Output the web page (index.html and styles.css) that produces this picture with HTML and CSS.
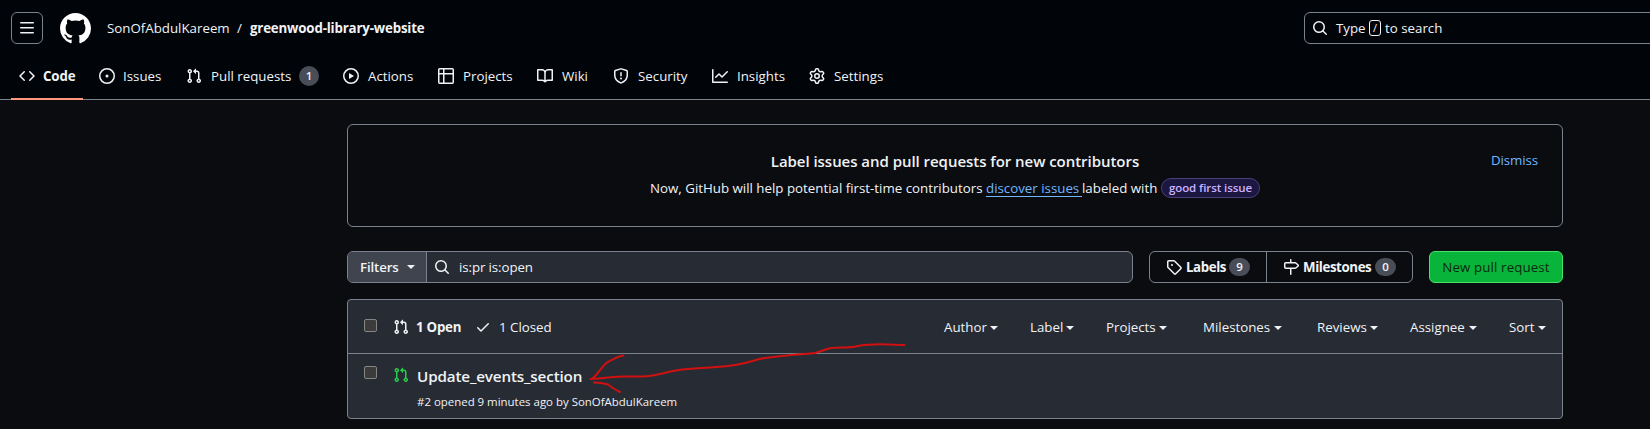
FILE: index.html
```
<!DOCTYPE html>
<html lang="en">
<head>
<meta charset="utf-8">
<title>Pull requests · greenwood-library-website</title>
<link rel="stylesheet" href="styles.css">
</head>
<body>
<svg class="defs" width="0" height="0">
  <symbol id="pr" viewBox="0 0 16 16"><path d="M1.5 3.25a2.25 2.25 0 1 1 3 2.122v5.256a2.251 2.251 0 1 1-1.5 0V5.372A2.25 2.25 0 0 1 1.5 3.25Zm5.677-.177L9.573.677A.25.25 0 0 1 10 .854V2.5h1A2.5 2.5 0 0 1 13.5 5v5.628a2.251 2.251 0 1 1-1.5 0V5a1 1 0 0 0-1-1h-1v1.646a.25.25 0 0 1-.427.177L7.177 3.427a.25.25 0 0 1 0-.354ZM3.75 2.5a.75.75 0 1 0 0 1.5.75.75 0 0 0 0-1.5Zm0 9.5a.75.75 0 1 0 0 1.5.75.75 0 0 0 0-1.5Zm8.25.75a.75.75 0 1 0 1.5 0 .75.75 0 0 0-1.5 0Z"/></symbol>
  <symbol id="search" viewBox="0 0 16 16"><path d="M10.68 11.74a6 6 0 0 1-7.922-8.982 6 6 0 0 1 8.982 7.922l3.04 3.04a.749.749 0 0 1-.326 1.275.749.749 0 0 1-.734-.215ZM11.5 7a4.499 4.499 0 1 0-8.997 0A4.499 4.499 0 0 0 11.5 7Z"/></symbol>
</svg>
<header class="header">
  <div class="topbar">
    <button class="menu-btn"><svg class="icon" viewBox="0 0 16 16"><path d="M1 2.75A.75.75 0 0 1 1.75 2h12.5a.75.75 0 0 1 0 1.5H1.75A.75.75 0 0 1 1 2.75Zm0 5A.75.75 0 0 1 1.75 7h12.5a.75.75 0 0 1 0 1.5H1.75A.75.75 0 0 1 1 7.75ZM1.75 12h12.5a.75.75 0 0 1 0 1.5H1.75a.75.75 0 0 1 0-1.5Z"/></svg></button>
    <svg class="logo" viewBox="0 0 16 16"><path d="M8 0c4.42 0 8 3.58 8 8a8.013 8.013 0 0 1-5.45 7.59c-.4.08-.55-.17-.55-.38 0-.27.01-1.13.01-2.2 0-.75-.25-1.23-.54-1.48 1.78-.2 3.65-.88 3.65-3.95 0-.88-.31-1.59-.82-2.15.08-.2.36-1.02-.08-2.12 0 0-.67-.22-2.2.82-.64-.18-1.32-.27-2-.27-.68 0-1.36.09-2 .27-1.53-1.03-2.2-.82-2.2-.82-.44 1.1-.16 1.92-.08 2.12-.51.56-.82 1.28-.82 2.15 0 3.06 1.86 3.75 3.64 3.95-.23.2-.44.55-.51 1.07-.46.21-1.61.55-2.33-.66-.15-.24-.6-.83-1.23-.82-.67.01-.27.38.01.53.34.19.73.9.82 1.13.16.45.68 1.31 2.69.94 0 .67.01 1.3.01 1.49 0 .21-.15.45-.55.38A7.995 7.995 0 0 1 0 8c0-4.42 3.58-8 8-8Z"/></svg>
    <div class="crumbs"><span class="owner">SonOfAbdulKareem</span><span class="slash">/</span><strong class="repo">greenwood-library-website</strong></div>
    <div class="global-search"><svg class="icon"><use href="#search"/></svg><span class="type">Type</span><kbd>/</kbd><span>to search</span></div>
  </div>
  <nav class="nav">
    <a class="tab tab-active"><svg class="icon" viewBox="0 0 16 16"><path d="m11.28 3.22 4.25 4.25a.75.75 0 0 1 0 1.06l-4.25 4.25a.749.749 0 0 1-1.275-.326.749.749 0 0 1 .215-.734L13.94 8l-3.72-3.72a.749.749 0 0 1 .326-1.275.749.749 0 0 1 .734.215Zm-6.56 0a.751.751 0 0 1 1.042.018.751.751 0 0 1 .018 1.042L2.06 8l3.72 3.72a.749.749 0 0 1-.326 1.275.749.749 0 0 1-.734-.215L.47 8.53a.75.75 0 0 1 0-1.06Z"/></svg><span class="w-code">Code</span></a>
    <a class="tab"><svg class="icon" viewBox="0 0 16 16"><path d="M8 9.5a1.5 1.5 0 1 0 0-3 1.5 1.5 0 0 0 0 3Z"/><path d="M8 0a8 8 0 1 1 0 16A8 8 0 0 1 8 0ZM1.5 8a6.5 6.5 0 1 0 13 0 6.5 6.5 0 0 0-13 0Z"/></svg><span class="w-issues">Issues</span></a>
    <a class="tab tab-wide"><svg class="icon"><use href="#pr"/></svg><span class="w-pulls">Pull requests</span><span class="count">1</span></a>
    <a class="tab tab-wide"><svg class="icon" viewBox="0 0 16 16"><path d="M8 0a8 8 0 1 1 0 16A8 8 0 0 1 8 0ZM1.5 8a6.5 6.5 0 1 0 13 0 6.5 6.5 0 0 0-13 0Zm4.879-2.773 4.264 2.559a.25.25 0 0 1 0 .428l-4.264 2.559A.25.25 0 0 1 6 10.559V5.442a.25.25 0 0 1 .379-.215Z"/></svg><span class="w-actions">Actions</span></a>
    <a class="tab tab-wide"><svg class="icon" viewBox="0 0 16 16"><path d="M0 1.75C0 .784.784 0 1.75 0h12.5C15.216 0 16 .784 16 1.75v12.5A1.75 1.75 0 0 1 14.25 16H1.75A1.75 1.75 0 0 1 0 14.25ZM6.5 6.5v8h7.75a.25.25 0 0 0 .25-.25V6.5Zm8-1.5V1.75a.25.25 0 0 0-.25-.25H6.5V5Zm-13 1.5v7.75c0 .138.112.25.25.25H5v-8ZM5 5V1.5H1.75a.25.25 0 0 0-.25.25V5Z"/></svg><span class="w-projects">Projects</span></a>
    <a class="tab tab-wide"><svg class="icon" viewBox="0 0 16 16"><path d="M0 1.75A.75.75 0 0 1 .75 1h4.253c1.227 0 2.317.59 3 1.501A3.743 3.743 0 0 1 11.006 1h4.245a.75.75 0 0 1 .75.75v10.5a.75.75 0 0 1-.75.75h-4.507a2.25 2.25 0 0 0-1.591.659l-.622.621a.75.75 0 0 1-1.06 0l-.622-.621A2.25 2.25 0 0 0 5.258 13H.75a.75.75 0 0 1-.75-.75Zm7.251 10.324.004-5.073-.002-2.253A2.25 2.25 0 0 0 5.003 2.5H1.5v9h3.757a3.75 3.75 0 0 1 1.994.574ZM8.755 4.75l-.004 7.322a3.752 3.752 0 0 1 1.992-.572H14.5v-9h-3.495a2.25 2.25 0 0 0-2.25 2.25Z"/></svg><span class="w-wiki">Wiki</span></a>
    <a class="tab tab-wide"><svg class="icon" viewBox="0 0 16 16"><path d="M7.467.133a1.748 1.748 0 0 1 1.066 0l5.25 1.68A1.75 1.75 0 0 1 15 3.48V7c0 1.566-.32 3.182-1.303 4.682-.983 1.498-2.585 2.813-5.032 3.855a1.697 1.697 0 0 1-1.33 0c-2.447-1.042-4.049-2.357-5.032-3.855C1.32 10.182 1 8.566 1 7V3.48a1.75 1.75 0 0 1 1.217-1.667Zm.61 1.429a.25.25 0 0 0-.153 0l-5.25 1.68a.25.25 0 0 0-.174.238V7c0 1.358.275 2.666 1.057 3.86.784 1.194 2.121 2.34 4.366 3.297a.196.196 0 0 0 .154 0c2.245-.956 3.582-2.104 4.366-3.298C13.225 9.666 13.5 8.36 13.5 7V3.48a.251.251 0 0 0-.174-.237l-5.25-1.68ZM8.75 4.75v3a.75.75 0 0 1-1.5 0v-3a.75.75 0 0 1 1.5 0ZM9 10.5a1 1 0 1 1-2 0 1 1 0 0 1 2 0Z"/></svg><span class="w-security">Security</span></a>
    <a class="tab tab-wide"><svg class="icon" viewBox="0 0 16 16"><path d="M1.5 1.75V13.5h13.75a.75.75 0 0 1 0 1.5H.75a.75.75 0 0 1-.75-.75V1.75a.75.75 0 0 1 1.5 0Zm14.28 2.53-5.25 5.25a.75.75 0 0 1-1.06 0L7 7.06 4.28 9.78a.751.751 0 0 1-1.042-.018.751.751 0 0 1-.018-1.042l3.25-3.25a.75.75 0 0 1 1.06 0L10 7.94l4.72-4.72a.751.751 0 0 1 1.042.018.751.751 0 0 1 .018 1.042Z"/></svg><span class="w-insights">Insights</span></a>
    <a class="tab tab-wide"><svg class="icon" viewBox="0 0 16 16"><path d="M8 0a8.2 8.2 0 0 1 .701.031C9.444.095 9.99.645 10.16 1.29l.288 1.107c.018.066.079.158.212.224.231.114.454.243.668.386.123.082.233.09.299.071l1.103-.303c.644-.176 1.392.021 1.82.63.27.385.506.792.704 1.218.315.675.111 1.422-.364 1.891l-.814.806c-.049.048-.098.147-.088.294.016.257.016.515 0 .772-.01.147.038.246.088.294l.814.806c.475.469.679 1.216.364 1.891a7.977 7.977 0 0 1-.704 1.217c-.428.61-1.176.807-1.82.63l-1.102-.302c-.067-.019-.177-.011-.3.071a5.909 5.909 0 0 1-.668.386c-.133.066-.194.158-.211.224l-.29 1.106c-.168.646-.715 1.196-1.458 1.26a8.006 8.006 0 0 1-1.402 0c-.743-.064-1.289-.614-1.458-1.26l-.289-1.106c-.018-.066-.079-.158-.212-.224a5.738 5.738 0 0 1-.668-.386c-.123-.082-.233-.09-.299-.071l-1.103.303c-.644.176-1.392-.021-1.82-.63a8.12 8.12 0 0 1-.704-1.218c-.315-.675-.111-1.422.363-1.891l.815-.806c.05-.048.098-.147.088-.294a6.214 6.214 0 0 1 0-.772c.01-.147-.038-.246-.088-.294l-.815-.806C.635 6.045.431 5.298.746 4.623a7.92 7.92 0 0 1 .704-1.217c.428-.61 1.176-.807 1.82-.63l1.102.302c.067.019.177.011.3-.071.214-.143.437-.272.668-.386.133-.066.194-.158.211-.224l.29-1.106C6.009.645 6.556.095 7.299.03 7.53.01 7.764 0 8 0Zm-.571 1.525c-.036.003-.108.036-.137.146l-.289 1.105c-.147.561-.549.967-.998 1.189-.173.086-.34.183-.5.29-.417.278-.97.423-1.529.27l-1.103-.303c-.109-.03-.175.016-.195.045-.22.312-.412.644-.573.99-.014.031-.021.11.059.19l.815.806c.411.406.562.957.53 1.456a4.709 4.709 0 0 0 0 .582c.032.499-.119 1.05-.53 1.456l-.815.806c-.081.08-.073.159-.059.19.162.346.353.677.573.989.02.03.085.076.195.046l1.102-.303c.56-.153 1.113-.008 1.53.27.161.107.328.204.501.29.447.222.85.629.997 1.189l.289 1.105c.029.109.101.143.137.146a6.6 6.6 0 0 0 1.142 0c.036-.003.108-.036.137-.146l.289-1.105c.147-.561.549-.967.998-1.189.173-.086.34-.183.5-.29.417-.278.97-.423 1.529-.27l1.103.303c.109.029.175-.016.195-.045.22-.313.411-.644.573-.99.014-.031.021-.11-.059-.19l-.815-.806c-.411-.406-.562-.957-.53-1.456a4.709 4.709 0 0 0 0-.582c-.032-.499.119-1.05.53-1.456l.815-.806c.081-.08.073-.159.059-.19a6.464 6.464 0 0 0-.573-.989c-.02-.03-.085-.076-.195-.046l-1.102.303c-.56.153-1.113.008-1.53-.27a4.44 4.44 0 0 0-.501-.29c-.447-.222-.85-.629-.997-1.189l-.289-1.105c-.029-.11-.101-.143-.137-.146a6.6 6.6 0 0 0-1.142 0ZM11 8a3 3 0 1 1-6 0 3 3 0 0 1 6 0ZM9.5 8a1.5 1.5 0 1 0-3.001.001A1.5 1.5 0 0 0 9.5 8Z"/></svg><span>Settings</span></a>
  </nav>
</header>
<main class="main">
  <section class="notice">
    <h2>Label issues and pull requests for new contributors</h2>
    <p><span class="now">Now, GitHub will help potential first-time contributors</span><a class="discover">discover issues</a><span class="labeled">labeled with</span><span class="label">good first issue</span></p>
    <a class="dismiss">Dismiss</a>
  </section>
  <div class="toolbar">
    <div class="filter">
      <button class="filters">Filters<i class="caret"></i></button>
      <div class="query"><svg class="icon"><use href="#search"/></svg><span>is:pr is:open</span></div>
    </div>
    <div class="group">
      <a class="labels"><svg class="icon" viewBox="0 0 16 16"><path d="M1 7.775V2.75C1 1.784 1.784 1 2.75 1h5.025c.464 0 .91.184 1.238.513l6.25 6.25a1.75 1.75 0 0 1 0 2.474l-5.026 5.026a1.75 1.75 0 0 1-2.474 0l-6.25-6.25A1.752 1.752 0 0 1 1 7.775Zm1.5 0c0 .066.026.13.073.177l6.25 6.25a.25.25 0 0 0 .354 0l5.025-5.025a.25.25 0 0 0 0-.354l-6.25-6.25a.25.25 0 0 0-.177-.073H2.75a.25.25 0 0 0-.25.25ZM6 5a1 1 0 1 1 0 2 1 1 0 0 1 0-2Z"/></svg><span class="w-labels">Labels</span><span class="count pill">9</span></a>
      <a class="milestones"><svg class="icon" viewBox="0 0 16 16"><path d="M7.75 0a.75.75 0 0 1 .75.75V3h3.634c.414 0 .814.147 1.13.414l2.07 1.75a1.75 1.75 0 0 1 0 2.672l-2.07 1.75a1.75 1.75 0 0 1-1.13.414H8.5v5.25a.75.75 0 0 1-1.5 0V10H2.75A1.75 1.75 0 0 1 1 8.25v-3.5C1 3.784 1.784 3 2.75 3H7V.75A.75.75 0 0 1 7.75 0Zm4.384 8.5a.25.25 0 0 0 .161-.06l2.07-1.75a.248.248 0 0 0 0-.38l-2.07-1.75a.25.25 0 0 0-.161-.06H2.75a.25.25 0 0 0-.25.25v3.5c0 .138.112.25.25.25h9.384Z"/></svg><span class="w-miles">Milestones</span><span class="count pill">0</span></a>
    </div>
    <button class="new">New pull request</button>
  </div>
  <section class="list">
    <div class="list-head">
      <span class="check"></span>
      <svg class="icon state"><use href="#pr"/></svg>
      <strong class="open">1 Open</strong>
      <svg class="icon tick" viewBox="0 0 16 16"><path d="M13.78 4.22a.75.75 0 0 1 0 1.06l-7.25 7.25a.75.75 0 0 1-1.06 0L2.22 9.28a.751.751 0 0 1 .018-1.042.751.751 0 0 1 1.042-.018L6 10.94l6.72-6.72a.75.75 0 0 1 1.06 0Z"/></svg>
      <span class="closed">1 Closed</span>
      <div class="sorts">
        <span class="s-author">Author<i class="caret"></i></span>
        <span class="s-label">Label<i class="caret"></i></span>
        <span class="s-projects">Projects<i class="caret"></i></span>
        <span class="s-miles">Milestones<i class="caret"></i></span>
        <span class="s-reviews">Reviews<i class="caret"></i></span>
        <span class="s-assignee">Assignee<i class="caret"></i></span>
        <span class="s-sort">Sort<i class="caret"></i></span>
      </div>
    </div>
    <article class="row">
      <span class="check"></span>
      <svg class="icon state green"><use href="#pr"/></svg>
      <div>
        <h3>Update_events_section</h3>
        <p>#2 opened 9 minutes ago by SonOfAbdulKareem</p>
      </div>
    </article>
  </section>
</main>
<svg class="arrow" width="340" height="60" viewBox="580 340 340 60"><path d="M904.500 345C888 344.500 872 343 858 346C845 349 837 346 827 349C815 354 811 353.500 800 354.300C783 356 769 356 756 360C740 365 730 366.500 716 367C700 368.500 685 368 668 372C650 377 646 376.500 625 376.500C615 376.300 605 378.500 590.500 379M593 378C601 371 601 367 607 362.500C615 358.500 618 356 623.500 355.500M594 382.500C600 383 604 383 608 384.500C613 388 616 390.500 620 392"/></svg>
</body>
</html>
```
FILE: styles.css
```
* { box-sizing: border-box; }
body {
  margin: 0;
  height: 429px;
  overflow: hidden;
  background: #0a0c10;
  color: #f0f3f6;
  font: 13.3px/20px "Open Sans", "Noto Sans", sans-serif;
}
h2, h3, p { margin: 0; }
button { font: inherit; color: inherit; padding: 0; }
strong { font-weight: 700; }
span, strong, a, h2, h3, p, button { white-space: nowrap; }
.defs { position: absolute; }
.icon { width: 16px; height: 16px; flex: none; fill: currentColor; }

.header { height: 100px; background: #010409; border-bottom: 1px solid #7a828e; }
.topbar { display: flex; align-items: center; height: 56px; padding-left: 11px; }
.menu-btn { width: 32px; height: 32px; display: grid; place-items: center; background: none; border: 1px solid #7a828e; border-radius: 6px; }
.logo { width: 31px; height: 31px; margin-left: 17px; fill: #fff; }
.crumbs { display: flex; margin-left: 16px; flex: none; }
.owner { width: 130px; }
.slash { width: 13px; }
.repo { letter-spacing: -0.18px; }
.global-search {
  display: flex;
  align-items: center;
  flex: none;
  width: 400px;
  height: 32px;
  margin-left: auto;
  margin-right: -54px;
  padding-left: 7px;
  border: 1px solid #7a828e;
  border-radius: 6px;
}
.type { width: 33px; margin-left: 8px; }
kbd { width: 12px; height: 16px; margin-right: 4px; border: 1px solid #f0f3f6; border-radius: 3px; font: 11px/14px "Open Sans", sans-serif; text-align: center; }

.nav { display: flex; gap: 8px; height: 44px; padding: 0 11px; }
.tab { display: flex; align-items: center; gap: 8px; height: 44px; padding: 0 8px 2px; border-bottom: 2px solid transparent; }
.tab-wide .icon { margin-right: 1px; }
.tab-active { font-weight: 700; border-bottom-color: #ff967d; }
.w-code { width: 32px; letter-spacing: -0.1px; }
.w-issues { width: 39px; }
.w-pulls { width: 80px; }
.w-actions { width: 46px; }
.w-projects { width: 50px; }
.w-wiki { width: 27px; }
.w-security { width: 50px; }
.w-insights { width: 48px; }
.count { width: 20px; height: 20px; border-radius: 10px; background: #484d57; text-align: center; font-size: 11.5px; line-height: 20px; font-weight: 600; }

.main { width: 1216px; margin: 24px 0 0 347px; }
.notice { position: relative; height: 103px; padding: 26px 0 0; border: 1px solid #7a828e; border-radius: 6px; text-align: center; }
.notice h2 { font-size: 15px; line-height: 20px; font-weight: 600; letter-spacing: -0.04px; }
.notice p { display: flex; height: 20px; margin-top: 7px; padding-left: 302px; text-align: left; }
.now { width: 336px; }
.discover { width: 96px; height: 19px; color: #71b7ff; border-bottom: 1px solid #71b7ff; }
.labeled { width: 79px; }
.label { width: 99px; height: 20px; border: 1px solid #4a3f7c; border-radius: 10px; background: #1c1740; color: #cbb2ff; font-size: 11.5px; line-height: 18px; font-weight: 600; letter-spacing: -0.08px; text-align: center; }
.dismiss { position: absolute; top: 25px; right: 24px; color: #71b7ff; letter-spacing: -0.1px; }

.toolbar { display: flex; height: 32px; margin-top: 24px; line-height: 30px; }
.filter { display: flex; width: 786px; border: 1px solid #7a828e; border-radius: 6px; overflow: hidden; background: #272b33; }
.filters { display: flex; align-items: center; width: 79px; padding-left: 12px; border: 0; border-right: 1px solid #7a828e; background: #3f444e; font-weight: 600; letter-spacing: -0.15px; }
.filters .caret { margin-left: 8px; }
.query { display: flex; align-items: center; gap: 9px; padding-left: 7px; letter-spacing: -0.1px; }
.caret { display: inline-block; border: 4px solid transparent; border-top-color: currentColor; border-bottom: 0; vertical-align: 1px; }
.group { display: flex; width: 264px; margin-left: 16px; border: 1px solid #7a828e; border-radius: 6px; font-weight: 700; }
.group a { display: flex; align-items: center; }
.labels { width: 117px; padding-left: 16px; border-right: 1px solid #7a828e; }
.milestones { padding-left: 16px; }
.group .icon { margin-right: 4px; }
.w-labels { width: 43px; letter-spacing: -0.4px; }
.w-miles { width: 72px; letter-spacing: -0.4px; }
.pill { width: 21px; height: 18px; line-height: 18px; border-radius: 9px; }
.new { width: 134px; margin-left: 16px; border: 1px solid #4ae168; border-radius: 6px; background: #09b43a; color: #0a2a10; font-weight: 500; letter-spacing: 0.12px; }

.list { height: 120px; margin-top: 16px; border: 1px solid #7a828e; border-radius: 4px; background: #272b33; }
.list-head { display: flex; align-items: center; height: 54px; padding-left: 16px; border-bottom: 1px solid #7a828e; }
.check { width: 13px; height: 13px; flex: none; border: 1px solid #858585; border-radius: 2px; background: #3b3b3b; }
.list-head .check { margin-top: -3px; }
.state { margin-left: 16px; }
.open { width: 59px; margin-left: 7px; letter-spacing: -0.25px; }
.closed { margin-left: 8px; }
.sorts { display: flex; margin-left: auto; }
.sorts span { display: flex; align-items: center; justify-content: space-between; }
.sorts .caret { margin-top: 3px; }
.s-author { width: 54px; margin-right: 32px; }
.s-label { width: 44px; margin-right: 32px; }
.s-projects { width: 61px; margin-right: 36px; }
.s-miles { width: 79px; margin-right: 35px; }
.s-reviews { width: 61px; margin-right: 32px; }
.s-assignee { width: 67px; margin-right: 32px; }
.s-sort { width: 37px; margin-right: 16px; }
.row { display: flex; padding: 12px 0 0 16px; }
.row .state { margin-top: 1px; }
.row div { margin-left: 8px; }
.row h3 { font-size: 15.2px; line-height: 20px; font-weight: 600; letter-spacing: -0.14px; }
.row p { margin-top: 7px; font-size: 11.45px; line-height: 18px; }
.green { color: #26cd4d; }
.arrow { position: absolute; left: 580px; top: 340px; fill: none; stroke: #d11010; stroke-width: 2; stroke-linecap: round; }
```
